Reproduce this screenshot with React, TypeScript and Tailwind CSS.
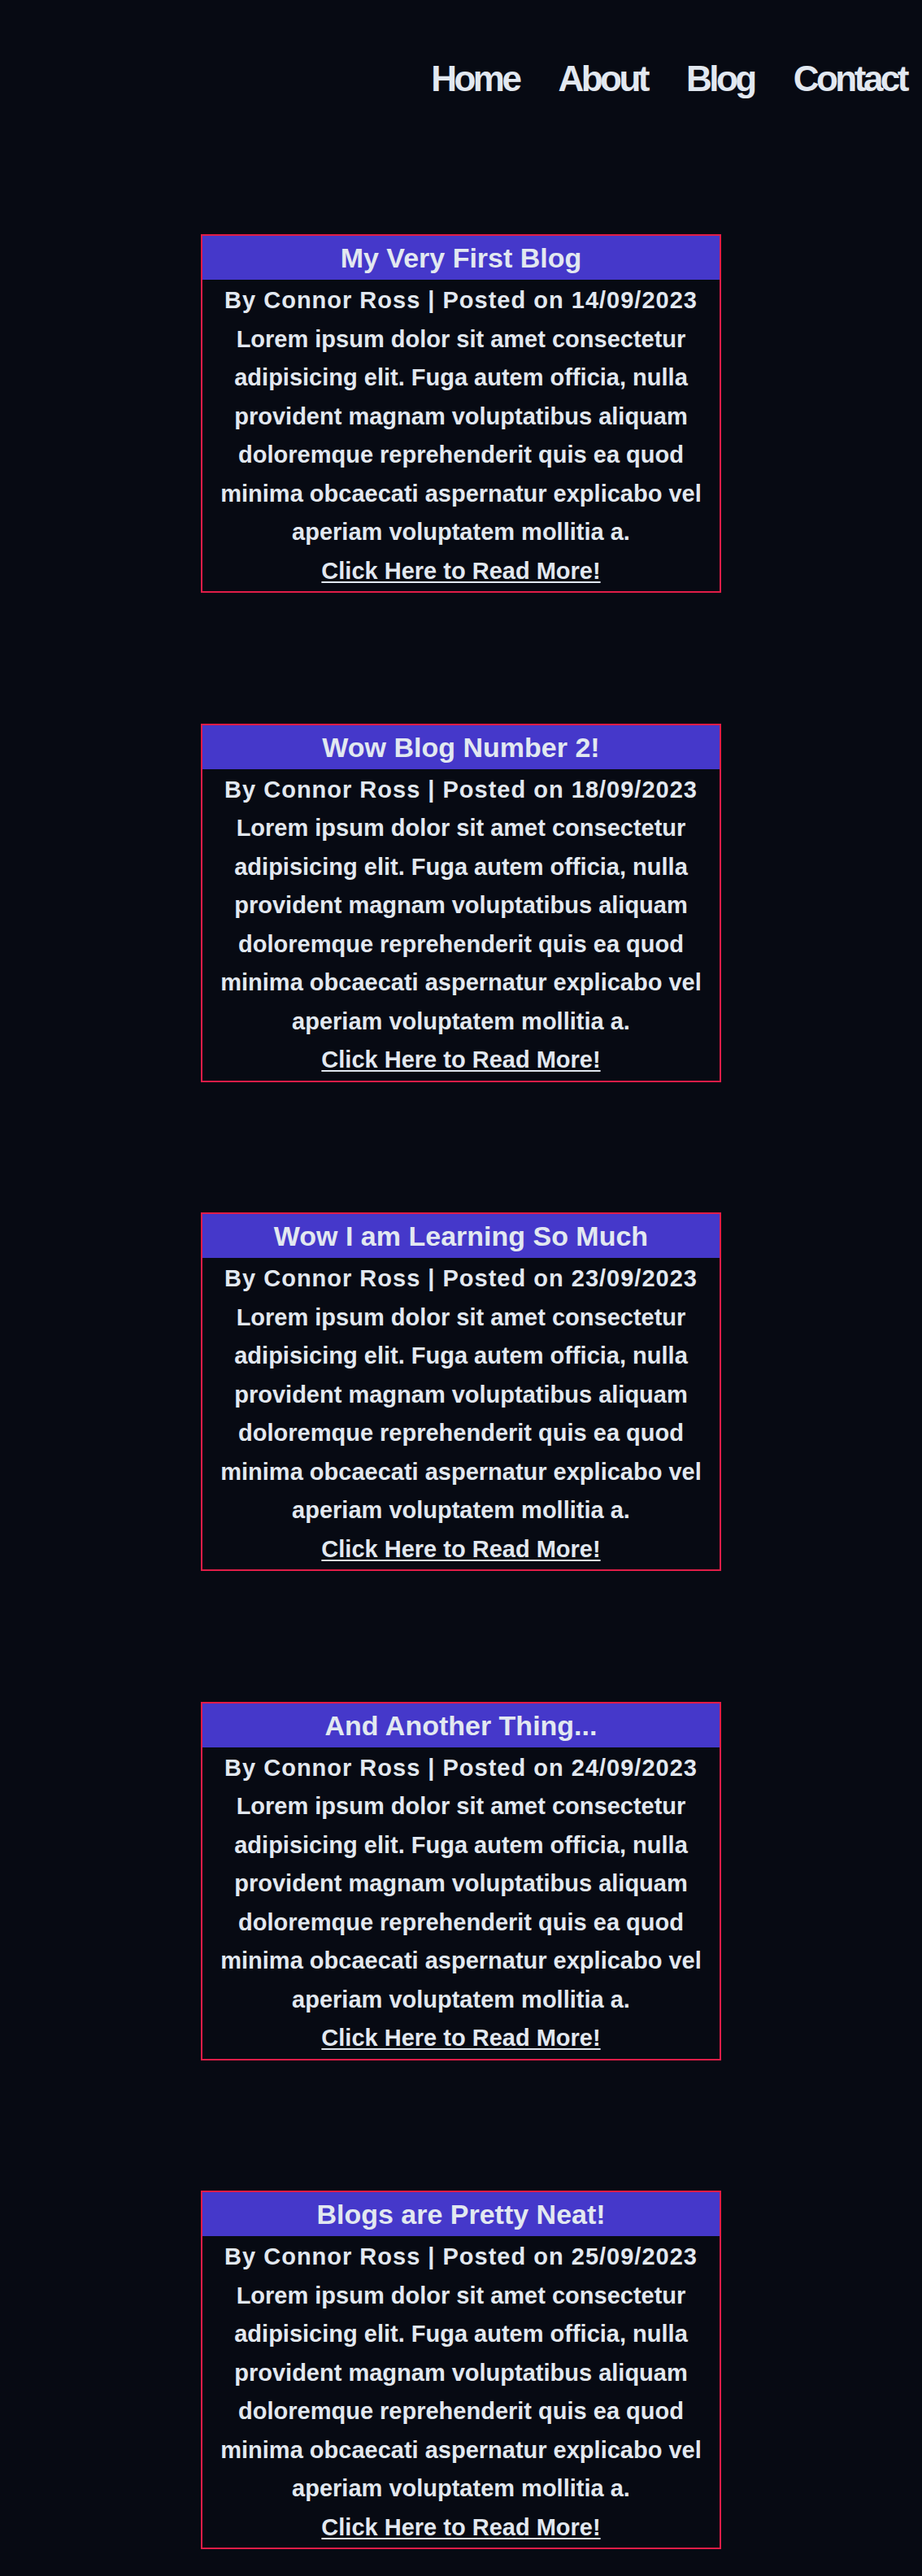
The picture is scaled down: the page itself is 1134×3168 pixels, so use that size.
const posts = [
  { title: "My Very First Blog", date: "14/09/2023" },
  { title: "Wow Blog Number 2!", date: "18/09/2023" },
  { title: "Wow I am Learning So Much", date: "23/09/2023" },
  { title: "And Another Thing...", date: "24/09/2023" },
  { title: "Blogs are Pretty Neat!", date: "25/09/2023" },
];

const lorem =
  "Lorem ipsum dolor sit amet consectetur adipisicing elit. Fuga autem officia, nulla provident magnam voluptatibus aliquam doloremque reprehenderit quis ea quod minima obcaecati aspernatur explicabo vel aperiam voluptatem mollitia a.";

function BlogCard({ title, date }: { title: string; date: string }) {
  return (
    <article className="w-[640px] border-2 border-[#e11d48] text-center">
      <h2 className="bg-[#4538ca] text-[34px] font-bold leading-[54px]">{title}</h2>
      <div className="pt-[2px] pb-[1px] text-[29px] font-bold leading-[47.5px]">
        <p className="tracking-[1px]">By Connor Ross | Posted on {date}</p>
        <p>{lorem}</p>
        <a href="#" className="underline underline-offset-[3px]">
          Click Here to Read More!
        </a>
      </div>
    </article>
  );
}

export default function App() {
  return (
    <div className="min-h-[3168px] bg-[#070a13] font-['Liberation_Sans',Arial,sans-serif] text-[#e2e8f0]">
      <nav className="flex justify-end gap-[48px] pt-[74px] pr-[19px] text-[44px] font-bold leading-[45px] tracking-[-3.5px]">
        <a href="#">Home</a>
        <a href="#">About</a>
        <a href="#">Blog</a>
        <a href="#">Contact</a>
      </nav>
      <main className="mt-[169px] flex flex-col items-center gap-[160.5px] pb-[33px]">
        {posts.map((p) => (
          <BlogCard key={p.title} title={p.title} date={p.date} />
        ))}
      </main>
    </div>
  );
}
